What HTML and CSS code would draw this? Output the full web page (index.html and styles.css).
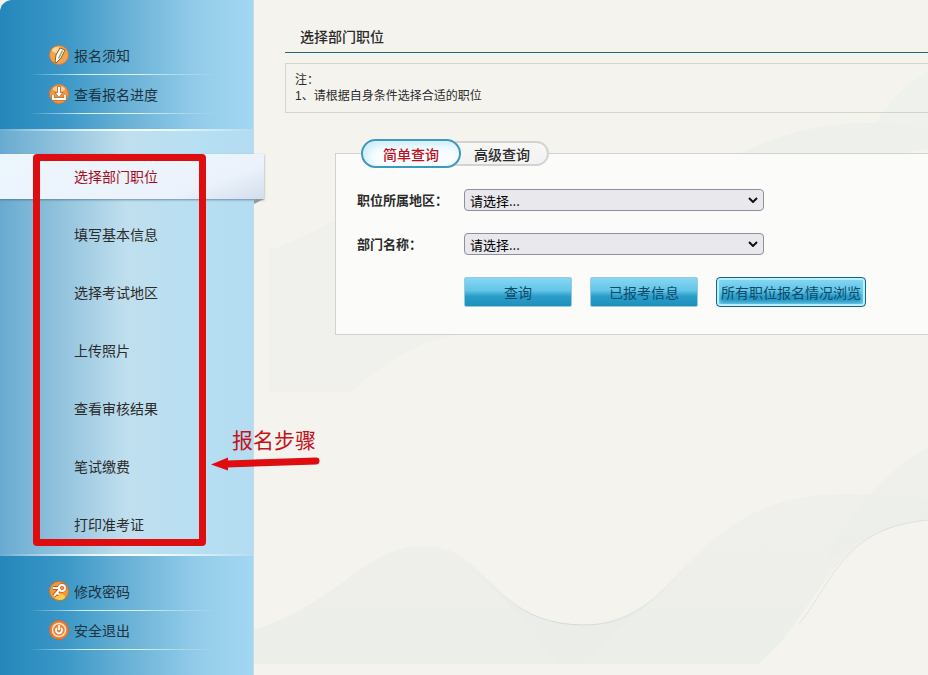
FILE: index.html
```html
<!DOCTYPE html>
<html lang="zh-CN">
<head>
  <meta charset="UTF-8">
  <title>选择部门职位</title>
  <link rel="stylesheet" href="styles.css">
</head>
<body>

  <div class="page">
    <aside class="sidebar">
      <nav class="menu menu-top">
        <a class="menu-link" href="#">
          <svg class="icon" viewBox="0 0 20 20">
            <circle cx="10" cy="10" r="9.5" fill="#f3a44b" stroke="#d97738"/>
            <ellipse cx="8" cy="5" rx="5" ry="3" fill="#fbd79a"/>
            <path d="M11 3l5 2-4 8-5 5-1-1 1-7z" fill="#fff" stroke="#8c5a1c"/>
            <path d="M13.500 5.500l-4 8" fill="none" stroke="#9aa86c" stroke-width="1.500"/>
          </svg>
          报名须知
        </a>
        <a class="menu-link" href="#">
          <svg class="icon" viewBox="0 0 20 20">
            <circle cx="10" cy="10" r="9.5" fill="#ee9745" stroke="#d97738"/>
            <ellipse cx="10" cy="5" rx="6" ry="3" fill="#f9cf95"/>
            <path d="M4 11v4h12v-4" fill="none" stroke="#a7632a" stroke-width="3"/>
            <path d="M4 11v4h12v-4" fill="none" stroke="#fff" stroke-width="1.800"/>
            <path d="M8.500 2.500h3v6H14l-4 5-4-5h2.500z" fill="#fff" stroke="#a7632a" stroke-width=".8"/>
          </svg>
          查看报名进度
        </a>
      </nav>

      <!-- 报名步骤 -->
      <nav class="steps">
        <a class="step active" href="#">选择部门职位</a>
        <a class="step" href="#">填写基本信息</a>
        <a class="step" href="#">选择考试地区</a>
        <a class="step" href="#">上传照片</a>
        <a class="step" href="#">查看审核结果</a>
        <a class="step" href="#">笔试缴费</a>
        <a class="step" href="#">打印准考证</a>
        <div class="mark-box"></div>
        <div class="mark-note">
          <span>报名步骤</span>
          <svg class="mark-arrow" viewBox="0 0 110 16">
            <path d="M105 6L16 9" stroke="#de0d10" stroke-width="7" stroke-linecap="round"/>
            <path d="M0 9.500L17 2.500v13z" fill="#de0d10"/>
          </svg>
        </div>
      </nav>

      <nav class="menu menu-bottom">
        <a class="menu-link" href="#">
          <svg class="icon" viewBox="0 0 20 20">
            <circle cx="10" cy="10" r="9.500" fill="#f09a3c" stroke="#dc6f2a"/>
            <ellipse cx="11" cy="16" rx="5" ry="3" fill="#ffd04a"/>
            <path d="M11 8L5 15M11 7H4M7 12l3 1" fill="none" stroke="#b9581a" stroke-width="4"/>
            <circle cx="13" cy="7" r="3" fill="none" stroke="#b9581a" stroke-width="3.500"/>
            <path d="M11 8L5 15M11 7H4M7 12l3 1" fill="none" stroke="#fff" stroke-width="2"/>
            <circle cx="13" cy="7" r="3" fill="none" stroke="#fff" stroke-width="2"/>
          </svg>
          修改密码
        </a>
        <a class="menu-link" href="#">
          <svg class="icon" viewBox="0 0 20 20">
            <circle cx="10" cy="10" r="9.500" fill="#e98139" stroke="#d9692b"/>
            <circle cx="10" cy="10" r="6.500" fill="none" stroke="#fbe3c4" stroke-width="1.500"/>
            <path d="M8 8a3 3 0 1 0 4 0M10 5v5" fill="none" stroke="#fff" stroke-width="1.800"/>
          </svg>
          安全退出
        </a>
      </nav>
    </aside>

    <main class="main">
      <svg class="waves" viewBox="0 0 675 675" preserveAspectRatio="xMinYMin slice">
        <defs>
          <linearGradient id="mist" x1="0" y1="0" x2="0" y2="1">
            <stop offset="0" stop-color="#eceee9" stop-opacity=".5"/>
            <stop offset="1" stop-color="#eceee9"/>
          </linearGradient>
          <linearGradient id="fade" x1="0" y1="0" x2="1" y2="0">
            <stop offset="0" stop-color="#d0dad2" stop-opacity="0"/>
            <stop offset=".5" stop-color="#d0dad2"/>
            <stop offset="1" stop-color="#d0dad2" stop-opacity="0"/>
          </linearGradient>
        </defs>
        <path d="M487 153Q550 122 617 123Q650 123 675 127V149Q663 150 652 153z" fill="#eef0eb"/>
        <path d="M622 123Q642 90 675 70V127z" fill="#eff1ec"/>
        <path d="M15 250Q50 238 82 220V335H197Q140 350 97 392H15z" fill="#f0f1ec"/>
        <path d="M0 630C90 600 110 546 170 546C235 546 240 625 330 625C430 625 430 494 592 494Q640 494 675 500V520C570 530 570 610 504 664H0z" fill="url(#mist)"/>
        <path d="M567 570C590 530 610 485 675 447V520Q600 530 567 570z" fill="#e9eee9" opacity=".5"/>
        <path d="M245 594Q285 625 330 625Q365 623 397 600Q360 635 325 664H306z" fill="#e7ece8" opacity=".5"/>
        <path d="M202 558C240 580 260 625 330 625C385 625 410 590 440 556" fill="none" stroke="url(#fade)"/>
        <path d="M675 520C590 527 580 580 545 624" fill="none" stroke="#d5ddd6" opacity=".7"/>
      </svg>

      <h1 class="title">选择部门职位</h1>

      <div class="notice">
        注：<br>
        1、请根据自身条件选择合适的职位
      </div>

      <form>
        <fieldset class="query">
          <legend class="tabs">
            <button type="button" class="tab tab-on">简单查询</button>
            <button type="button" class="tab">高级查询</button>
          </legend>
          <div class="row">
            <label for="area">职位所属地区：</label>
            <div class="pick">
              <select id="area"><option>请选择...</option></select>
              <svg viewBox="0 0 10 6"><path d="M1 1l4 4 4-4"/></svg>
            </div>
          </div>
          <div class="row">
            <label for="dept">部门名称：</label>
            <div class="pick">
              <select id="dept"><option>请选择...</option></select>
              <svg viewBox="0 0 10 6"><path d="M1 1l4 4 4-4"/></svg>
            </div>
          </div>
          <div class="actions">
            <button type="button" class="btn">查询</button>
            <button type="button" class="btn">已报考信息</button>
            <button type="button" class="btn btn-wide">所有职位报名情况浏览</button>
          </div>
        </fieldset>
      </form>
    </main>
  </div>

</body>
</html>
```
FILE: styles.css
```css
* {
  box-sizing: border-box;
}
body {
  margin: 0;
  font-family: "Noto Sans CJK SC", sans-serif;
  font-size: 14px;
  color: #2b2b2b;
  background: #f4f3ee;
}
button, select {
  font-family: inherit;
}
.page {
  display: flex;
  min-height: 100vh;
}

/* 左侧导航 */
.sidebar {
  position: relative;
  z-index: 1;
  display: flex;
  flex-direction: column;
  flex: 0 0 254px;
  border-right: 1px solid #c3dbe6;
  border-top-left-radius: 12px;
  background: linear-gradient(to right, #2487bb, #3a97c6 25%, #69b1d6 50%, #93cce9 78%, #a2d7f2);
}
.menu-top {
  padding: 36px 38px 15px 30px;
}
.menu-bottom {
  padding: 16px 38px 24px 30px;
}
.menu-link {
  display: flex;
  align-items: center;
  gap: 5px;
  height: 39px;
  padding-left: 19px;
  color: #1c3340;
  text-decoration: none;
  border-bottom: 1px solid;
  border-image: linear-gradient(to right, transparent, #d8f1f4 30%, #d8f1f4 60%, transparent) 1;
}
.icon {
  width: 20px;
  height: 20px;
}
.steps {
  position: relative;
  display: flex;
  flex-direction: column;
  gap: 13px;
  padding: 23px 0 7px;
  background: linear-gradient(to right, #68abd0, #94c4de 25%, #c0dfee 50%, #b8dff2 75%, #b3dcf2);
  border-top: 2px solid;
  border-bottom: 2px solid;
  border-image: linear-gradient(to right, transparent, #f4fcff 45%, #f4fcff 60%, transparent) 2;
}
.step {
  height: 45px;
  padding-left: 74px;
  line-height: 44px;
  color: #2b2b2b;
  text-decoration: none;
}
.step.active {
  position: relative;
  margin-right: -11px;
  color: #a90f1c;
  background: linear-gradient(160deg, #ecf6fd, #ebf2fb 75%, #d3deeb);
  box-shadow: 0 1px 2px rgba(60, 90, 110, 0.6);
}
/* 折角 */
.step.active::after {
  content: "";
  position: absolute;
  right: 0;
  top: 100%;
  border-top: 5px solid #93989b;
  border-right: 10px solid transparent;
}

/* 红色标注 */
.mark-box {
  position: absolute;
  top: 23px;
  bottom: 8px;
  left: 33px;
  right: 47px;
  border: 7px solid #de0d10;
  border-radius: 4px;
  pointer-events: none;
}
.mark-note {
  position: absolute;
  top: 292px;
  left: 211px;
  width: 110px;
  padding-left: 21px;
  font-size: 21px;
  line-height: 32px;
  color: #c4141b;
  white-space: nowrap;
}
.mark-arrow {
  display: block;
  width: 110px;
  margin-left: -21px;
}

/* 右侧内容 */
.main {
  position: relative;
  flex: 1;
  min-width: 0;
  padding: 22px 0 40px 31px;
  overflow: hidden;
}
.waves {
  position: absolute;
  top: 0;
  left: 0;
  width: 100%;
  height: 100%;
  z-index: -1;
}
.title {
  margin: 0;
  padding: 0 0 2px 15px;
  font-size: 14px;
  font-weight: 500;
  line-height: 28px;
  border-bottom: 1px solid #20697f;
}
.notice {
  margin-top: 10px;
  padding: 8px 9px;
  font-family: "Liberation Sans", "Noto Sans CJK SC", sans-serif;
  font-size: 12px;
  line-height: 16px;
  border: 1px solid #d0d6c9;
  border-right: 0;
}
.query {
  min-width: 0;
  margin: 26px 0 0 50px;
  padding: 21px 0 27px 21px;
  background: rgba(253, 253, 252, 0.8);
  border: 1px solid #d2d2d0;
  border-right: 0;
}
.tabs {
  display: flex;
  align-items: center;
  margin-left: 4px;
  padding: 0;
}
.tab {
  height: 25px;
  margin-left: -16px;
  padding: 0 17px 0 27px;
  font-size: 14px;
  font-weight: 500;
  line-height: 20px;
  color: #2b2b2b;
  background: linear-gradient(#f7f7f6, #f2f2f2);
  border: 2px solid #d3d4d2;
  border-radius: 13px;
}
.tab-on {
  position: relative;
  height: 29px;
  margin-left: 0;
  padding: 0 20px;
  color: #c1101c;
  background: #f8fdff;
  border-color: #3d9abb;
  border-radius: 15px;
  box-shadow: inset 4px 4px 8px #c9edfa;
}
.row {
  display: flex;
  align-items: center;
  margin-bottom: 22px;
}
.row label {
  flex: 0 0 107px;
  font-size: 13px;
  font-weight: bold;
  line-height: 22px;
}
.pick {
  position: relative;
  width: 300px;
}
.pick select {
  display: block;
  width: 100%;
  height: 22px;
  padding: 0 5px;
  font-size: 13px;
  color: #000;
  background: #e9e9ed;
  border: 1px solid #8f8f9d;
  border-radius: 4px;
  appearance: none;
}
.pick svg {
  position: absolute;
  top: 8px;
  right: 6px;
  width: 10px;
  height: 6px;
  fill: none;
  stroke: #111;
  stroke-width: 2;
  pointer-events: none;
}
.actions {
  display: flex;
  gap: 18px;
  padding-left: 107px;
}
.btn {
  width: 108px;
  height: 30px;
  padding: 0;
  font-size: 14px;
  color: #0d4a69;
  background: linear-gradient(#86d8f5, #63c4e6 45%, #2a9cc8 65%, #1d91bd);
  border: 1px solid #9cc9da;
  border-radius: 2px;
}
.btn-wide {
  width: 150px;
  border-color: #17668a;
  border-radius: 4px;
  box-shadow: inset 0 0 0 2px #b9f0fb, inset 0 0 4px 3px #7fd8f2;
}
```
